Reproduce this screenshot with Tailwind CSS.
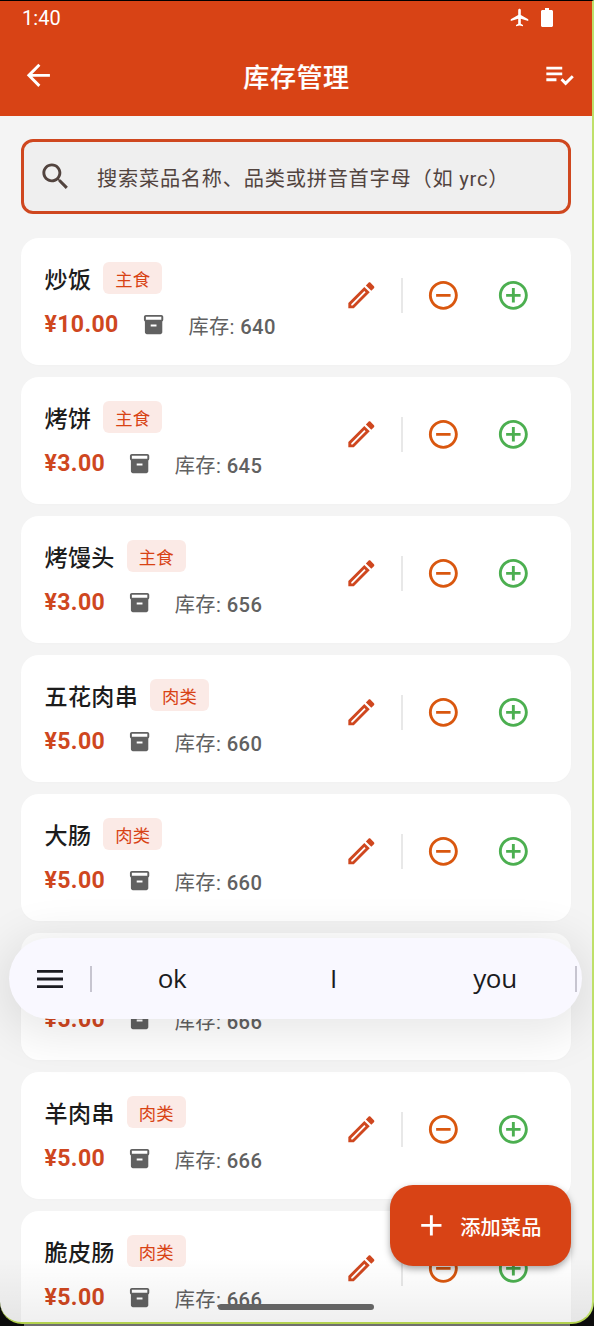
<!DOCTYPE html>
<html lang="zh-CN">
  <head>
    <meta charset="UTF-8" />
    <meta name="viewport" content="width=device-width, initial-scale=1.0" />
    <title>库存管理</title>
    <!-- Tailwind CDN -->
    <script src="https://cdn.jsdelivr.net/npm/@tailwindcss/browser@4"></script>
  </head>

  <body class="bg-[#6f6f6f] font-['Roboto','Noto_Sans_CJK_SC',sans-serif]">
    <!-- Black corners behind the rounded screen -->
    <div class="relative h-[1326px] w-[594px] overflow-hidden">
      <div class="absolute bottom-0 left-0 size-6 bg-[#0c0c0c]"></div>
      <div class="absolute right-0 bottom-0 size-6 bg-[#0c0c0c]"></div>

      <!-- Screen -->
      <div
        class="relative flex h-[1324px] w-[594px] flex-col overflow-hidden rounded-b-[22px] border-t border-r-2 border-b-2 border-t-black border-r-[#bfe06a] border-b-[#b3d24f] bg-[#f4f4f4]"
      >
        <!-- Header -->
        <header class="h-[115px] shrink-0 bg-[#d84315] text-white">
          <div class="flex h-8 items-center justify-between pr-[39px] pl-[22px]">
            <span class="pt-px text-[20px] tracking-[0.1px]">1:40</span>
            <div class="flex items-center gap-[11px]">
              <svg class="size-[21px]" viewBox="0 0 24 24" fill="currentColor">
                <path d="M22 16v-2l-8.5-5V3.5c0-.83-.67-1.5-1.5-1.5s-1.5.67-1.5 1.5V9L2 14v2l8.5-2.5V19L8 20.5V22l4-1 4 1v-1.5L13.5 19v-5.5L22 16z" />
              </svg>
              <svg class="h-[19px] w-3" viewBox="0 0 12 19" fill="currentColor">
                <path d="M4 0h4v2h2.5c.8 0 1.5.7 1.5 1.5v14c0 .8-.7 1.5-1.5 1.5h-9C.7 19 0 18.3 0 17.5v-14C0 2.7.7 2 1.5 2H4z" />
              </svg>
            </div>
          </div>
          <div class="flex h-[85px] items-center justify-between pr-[15px] pl-[21px]">
            <svg class="size-[34.7px]" viewBox="0 0 24 24" fill="currentColor">
              <path d="M20 11H7.83l5.59-5.59L12 4l-8 8 8 8 1.41-1.41L7.83 13H20v-2z" />
            </svg>
            <h1 class="pt-[6px] pr-[5px] text-[26px] font-medium tracking-[0.6px] [-webkit-text-stroke:0.2px_white]">库存管理</h1>
            <svg class="size-[34.7px]" viewBox="0 0 24 24" fill="currentColor">
              <path d="M3 10h11v2H3zm0-4h11v2H3zm0 8h7v2H3zm17.59-2.07l-4.25 4.24-2.12-2.12-1.41 1.41L16.34 19 22 13.34z" />
            </svg>
          </div>
        </header>

        <!-- Search box -->
        <div class="mt-[23px] ml-[21px] flex h-[75px] w-[550px] shrink-0 items-center rounded-xl border-3 border-[#cf471f] bg-[#efefef] pl-[14px] text-[#52443f]">
          <svg class="size-[35px]" viewBox="0 0 24 24" fill="currentColor">
            <path d="M15.5 14h-.79l-.28-.27C15.41 12.59 16 11.11 16 9.5 16 5.91 13.09 3 9.5 3S3 5.91 3 9.5 5.91 16 9.5 16c1.61 0 3.09-.59 4.23-1.57l.27.28v.79l5 4.99L20.49 19l-4.99-5zm-6 0C7.01 14 5 11.99 5 9.5S7.01 5 9.5 5 14 7.01 14 9.5 11.99 14 9.5 14z" />
          </svg>
          <span class="ml-6 pt-[5px] text-[20.2px] tracking-[0.78px] whitespace-nowrap">搜索菜品名称、品类或拼音首字母（如 yrc）</span>
        </div>

        <!-- Dish list -->
        <ul id="dishes" class="mt-6 ml-[21px] flex w-[550px] flex-col gap-3"></ul>

        <!-- Bottom fade -->
        <div class="absolute right-0 bottom-0 left-0 h-16 bg-linear-to-b from-black/0 to-black/6"></div>

        <!-- Keyboard suggestion strip -->
        <div class="absolute top-[937px] left-[9px] flex h-[81px] w-[573px] items-center rounded-full bg-[#f9f8ff] text-[#1b1b21] shadow-[0_8px_45px_10px_rgba(0,0,0,0.09)]">
          <svg class="ml-7 h-[18px] w-[26px]" viewBox="0 0 26 18" fill="currentColor">
            <path d="M0 0h26v2.8H0zM0 7.6h26v2.8H0zM0 15.2h26V18H0z" />
          </svg>
          <div class="ml-[27px] h-[26px] w-0.5 bg-[#c7c5d0]"></div>
          <div class="flex flex-1 text-center font-['Open_Sans',sans-serif] text-[26px] tracking-[-0.3px]">
            <span class="w-[160px]">ok</span>
            <span class="w-[163px]">I</span>
            <span class="w-[160px]">you</span>
          </div>
          <div class="mr-[5px] h-[26px] w-0.5 bg-[#c7c5d0]"></div>
        </div>

        <!-- Home indicator -->
        <div class="absolute top-[1303px] left-[218px] h-1.5 w-[156px] rounded-full bg-[#646464]"></div>

        <!-- Add button -->
        <button class="absolute top-[1184px] left-[390px] flex h-[81px] w-[181px] items-center rounded-[23px] bg-[#d84315] pl-6 text-white shadow-[0_3px_7px_rgba(0,0,0,0.35)]">
          <svg class="size-[34.7px]" viewBox="0 0 24 24" fill="currentColor">
            <path d="M19 13h-6v6h-2v-6H5v-2h6V5h2v6h6v2z" />
          </svg>
          <span class="ml-[11.5px] pt-[5px] text-[20.2px] font-medium tracking-[0.15px]">添加菜品</span>
        </button>
      </div>
    </div>

    <script>
      const dishes = [
        { name: "炒饭", type: "主食", price: "10.00", stock: 640 },
        { name: "烤饼", type: "主食", price: "3.00", stock: 645 },
        { name: "烤馒头", type: "主食", price: "3.00", stock: 656 },
        { name: "五花肉串", type: "肉类", price: "5.00", stock: 660 },
        { name: "大肠", type: "肉类", price: "5.00", stock: 660 },
        { name: "", type: "", price: "5.00", stock: 666 },
        { name: "羊肉串", type: "肉类", price: "5.00", stock: 666 },
        { name: "脆皮肠", type: "肉类", price: "5.00", stock: 666 },
      ];

      // Name and category line, left blank when the dish has no name
      function titleRow(dish) {
        if (!dish.name) return "";
        return `
          <span class="pt-1.5 text-[23.1px] font-medium tracking-[0.3px] text-[#1c1c1c]">${dish.name}</span>
          <span class="ml-[12px] flex h-8 items-center rounded-md bg-[#fbeae6] px-3 pt-1 text-[17.35px] tracking-[0.1px] text-[#d84315]">${dish.type}</span>`;
      }

      document.getElementById("dishes").innerHTML = dishes
        .map(
          (dish) => `
        <li class="flex h-[127px] shrink-0 justify-between rounded-[18px] bg-white pt-6 pr-[40.5px] pl-[23.5px] shadow-[0_1px_2px_rgba(0,0,0,0.015)]">
          <div>
            <div class="flex h-8 items-center whitespace-nowrap">${titleRow(dish)}</div>
            <div class="mt-3 flex h-9 items-center whitespace-nowrap">
              <span class="pt-0.5 text-[23.1px] font-bold tracking-[0.35px] text-[#cf471f]">¥${dish.price}</span>
              <svg class="mt-px ml-[23px] size-[23.2px] text-[#616161]" viewBox="0 0 24 24" fill="currentColor">
                <path d="M20 2H4c-1 0-2 .9-2 2v3.01c0 .72.43 1.34 1 1.69V20c0 1.1 1.1 2 2 2h14c.9 0 2-.9 2-2V8.7c.57-.35 1-.97 1-1.69V4c0-1.1-1-2-2-2zm-5 12H9v-2h6v2zm5-7H4V4l16-.02V7z" />
              </svg>
              <span class="ml-[23.5px] pt-[6px] text-[20.2px] tracking-[0.4px] text-[#616161]">库存: <span class="font-medium">${dish.stock}</span></span>
            </div>
          </div>
          <div class="mt-[16px] flex h-[35px] items-center">
            <svg class="size-[34.7px] text-[#cf471f]" viewBox="0 0 24 24" fill="currentColor">
              <path d="M14.06 9.02l.92.92L5.92 19H5v-.92l9.06-9.06M17.66 3c-.25 0-.51.1-.7.29l-1.83 1.83 3.75 3.75 1.83-1.83c.39-.39.39-1.02 0-1.41l-2.34-2.34c-.2-.2-.45-.29-.71-.29zm-3.6 3.19L3 17.25V21h3.75L17.81 9.94l-3.75-3.75z" />
            </svg>
            <div class="ml-[23px] h-[35px] w-[2px] bg-[#e8e8e8]"></div>
            <svg class="ml-[23px] size-[34.7px] text-[#d9570f]" viewBox="0 0 24 24" fill="currentColor">
              <path d="M7 11v2h10v-2H7zm5-9C6.48 2 2 6.48 2 12s4.48 10 10 10 10-4.48 10-10S17.52 2 12 2zm0 18c-4.41 0-8-3.59-8-8s3.59-8 8-8 8 3.59 8 8-3.59 8-8 8z" />
            </svg>
            <svg class="ml-[34.7px] size-[34.7px] text-[#4caf50]" viewBox="0 0 24 24" fill="currentColor">
              <path d="M13 7h-2v4H7v2h4v4h2v-4h4v-2h-4V7zm-1-5C6.48 2 2 6.48 2 12s4.48 10 10 10 10-4.48 10-10S17.52 2 12 2zm0 18c-4.41 0-8-3.59-8-8s3.59-8 8-8 8 3.59 8 8-3.59 8-8 8z" />
            </svg>
          </div>
        </li>`
        )
        .join("");
    </script>
  </body>
</html>
